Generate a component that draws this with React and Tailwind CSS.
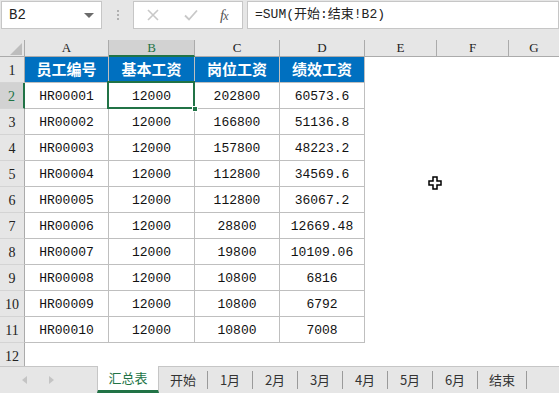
import React from "react";

const mono = "font-['Liberation_Mono','Noto_Sans_CJK_SC',monospace]";
const cjk = "font-['Noto_Sans_CJK_SC','Liberation_Sans',sans-serif]";

const cols = ["A", "B", "C", "D", "E", "F", "G"];
const heads = ["员工编号", "基本工资", "岗位工资", "绩效工资"];
const rows = [
  ["HR00001", "12000", "202800", "60573.6"],
  ["HR00002", "12000", "166800", "51136.8"],
  ["HR00003", "12000", "157800", "48223.2"],
  ["HR00004", "12000", "112800", "34569.6"],
  ["HR00005", "12000", "112800", "36067.2"],
  ["HR00006", "12000", "28800", "12669.48"],
  ["HR00007", "12000", "19800", "10109.06"],
  ["HR00008", "12000", "10800", "6816"],
  ["HR00009", "12000", "10800", "6792"],
  ["HR00010", "12000", "10800", "7008"],
];
const tabs = ["开始", "1月", "2月", "3月", "4月", "5月", "6月", "结束"];
const tabW = ["w-[49px]", "w-[45px]", "w-[45px]", "w-[45px]", "w-[45px]", "w-[45px]", "w-[45px]", "w-[49px]"];

const RowHead = ({ n, active }) => (
  <div
    className={`flex items-end justify-center pb-[1px] border-b border-[#d4d4d4] text-[14px] font-['Liberation_Serif',serif] ${
      active
        ? "bg-[#d2d2d2] text-[#217346] border-r-2 border-r-[#217346]"
        : "bg-[#e6e6e6] text-[#222] border-r border-r-[#ababab]"
    }`}
  >
    {n}
  </div>
);

const App = () => {
  return (
    <div className="w-[559px] h-[393px] bg-white overflow-hidden relative select-none">
      {/* toolbar */}
      <div className="h-[40px] bg-[#e6e6e6] flex items-start pt-[1px]">
        <div className="ml-[1px] w-[101px] h-[28px] bg-white border border-[#c6c6c6] flex items-center justify-between pl-[7px] pr-[7px]">
          <span className={`text-[14px] text-[#222] ${mono}`}>B2</span>
          <span className="w-0 h-0 border-l-[5px] border-r-[5px] border-t-[5px] border-l-transparent border-r-transparent border-t-[#6b6b6b]" />
        </div>
        <div className="w-[31px] h-[28px] flex flex-col items-center justify-center gap-[2px]">
          <span className="w-[2px] h-[2px] bg-[#b0b0b0]" />
          <span className="w-[2px] h-[2px] bg-[#b0b0b0]" />
          <span className="w-[2px] h-[2px] bg-[#b0b0b0]" />
        </div>
        <div className="w-[110px] h-[28px] bg-white border border-[#c6c6c6] flex items-center pl-[13px]">
          <svg width="12" height="12" viewBox="0 0 12 12" className="mr-[25px]">
            <path d="M1 1L11 11M11 1L1 11" stroke="#c8c8c8" strokeWidth="1.6" />
          </svg>
          <svg width="14" height="12" viewBox="0 0 14 12" className="mr-[22px]">
            <path d="M1 6.5L5 10.5L13 1.5" stroke="#c8c8c8" strokeWidth="1.8" fill="none" />
          </svg>
          <span className="text-[15px] italic text-[#555] font-['Liberation_Serif',serif] tracking-[-1px]">
            f<span className="text-[12px]">x</span>
          </span>
        </div>
        <div className="ml-[4px] flex-1 h-[28px] bg-white border border-[#c6c6c6] flex items-center pl-[7px]">
          <span className={`text-[13px] text-[#222] ${mono}`}>=SUM(开始:结束!B2)</span>
        </div>
      </div>

      {/* sheet */}
      <div className="h-[326px] overflow-hidden relative">
        <div className="grid grid-cols-[25px_84px_86px_85px_85px_72px_72px_1fr] grid-rows-[17px_repeat(12,26px)]">
          {/* column headers */}
          <div className="bg-[#e6e6e6] border-b border-[#ababab] border-r border-r-[#ababab] relative">
            <svg width="12" height="12" viewBox="0 0 12 12" className="absolute left-[10px] top-[3px]">
              <path d="M12 0L12 12L0 12Z" fill="#bdbdbd" />
            </svg>
          </div>
          {cols.map((c) => (
            <div
              key={c}
              className={`flex items-center justify-center text-[13px] font-['Liberation_Serif',serif] ${
                c === "B"
                  ? "bg-[#d2d2d2] text-[#217346] border-b-2 border-[#217346]"
                  : "bg-[#e6e6e6] text-[#222] border-b border-[#ababab]"
              } ${c === "G" ? "" : "border-r border-r-[#ababab]"}`}
            >
              {c}
            </div>
          ))}

          {/* row 1 */}
          <RowHead n={1} />
          {heads.map((h) => (
            <div
              key={h}
              className={`bg-[#0070c0] text-white font-bold text-[15px] flex items-center justify-center border-r border-b border-[#bfbfbf] ${cjk}`}
            >
              {h}
            </div>
          ))}
          <div />
          <div />
          <div />

          {/* data rows */}
          {rows.map((r, i) => (
            <React.Fragment key={i}>
              <RowHead n={i + 2} active={i === 0} />
              {r.map((v, j) => (
                <div
                  key={j}
                  className={`flex items-center justify-center pt-[2px] text-[13px] text-[#111] border-r border-b border-[#bfbfbf] ${mono} ${
                    i === 0 && j === 1 ? "relative" : ""
                  }`}
                >
                  {v}
                  {i === 0 && j === 1 && (
                    <>
                      <span className="absolute left-[-2px] top-[-2px] right-[-1px] bottom-[-1px] border-2 border-[#217346]" />
                      <span className="absolute right-[-4px] bottom-[-4px] w-[6px] h-[6px] bg-[#217346] border border-white" />
                    </>
                  )}
                </div>
              ))}
              <div />
              <div />
              <div />
            </React.Fragment>
          ))}

          {/* row 12 */}
          <RowHead n={12} />
          <div className="col-span-7" />
        </div>

        {/* cursor */}
        <svg width="14" height="14" viewBox="0 0 14 14" className="absolute left-[428px] top-[136px]">
          <path d="M5 1H9V5H13V9H9V13H5V9H1V5H5Z" fill="white" stroke="black" strokeWidth="1.5" />
        </svg>
      </div>

      {/* tab bar */}
      <div className="h-[27px] bg-[#e6e6e6] border-t border-[#c6c6c6] flex items-stretch">
        <div className="w-[97px] flex items-center pl-[22px] gap-[22px]">
          <span className="w-0 h-0 border-t-[4px] border-b-[4px] border-r-[5px] border-t-transparent border-b-transparent border-r-[#c4c4c4]" />
          <span className="w-0 h-0 border-t-[4px] border-b-[4px] border-l-[5px] border-t-transparent border-b-transparent border-l-[#c4c4c4]" />
        </div>
        <div
          className={`w-[62px] -mt-[1px] bg-white border-l border-r border-[#c6c6c6] border-b-[3px] border-b-[#217346] flex items-center justify-center text-[13px] text-[#217346] ${cjk}`}
        >
          汇总表
        </div>
        {tabs.map((t, i) => (
          <div key={t} className={`${tabW[i]} flex items-center`}>
            <span className={`flex-1 text-center text-[13px] text-[#333] ${cjk}`}>{t}</span>
            <span className="w-[1px] h-[18px] bg-[#9a9a9a]" />
          </div>
        ))}
      </div>
    </div>
  );
};

export default App;
